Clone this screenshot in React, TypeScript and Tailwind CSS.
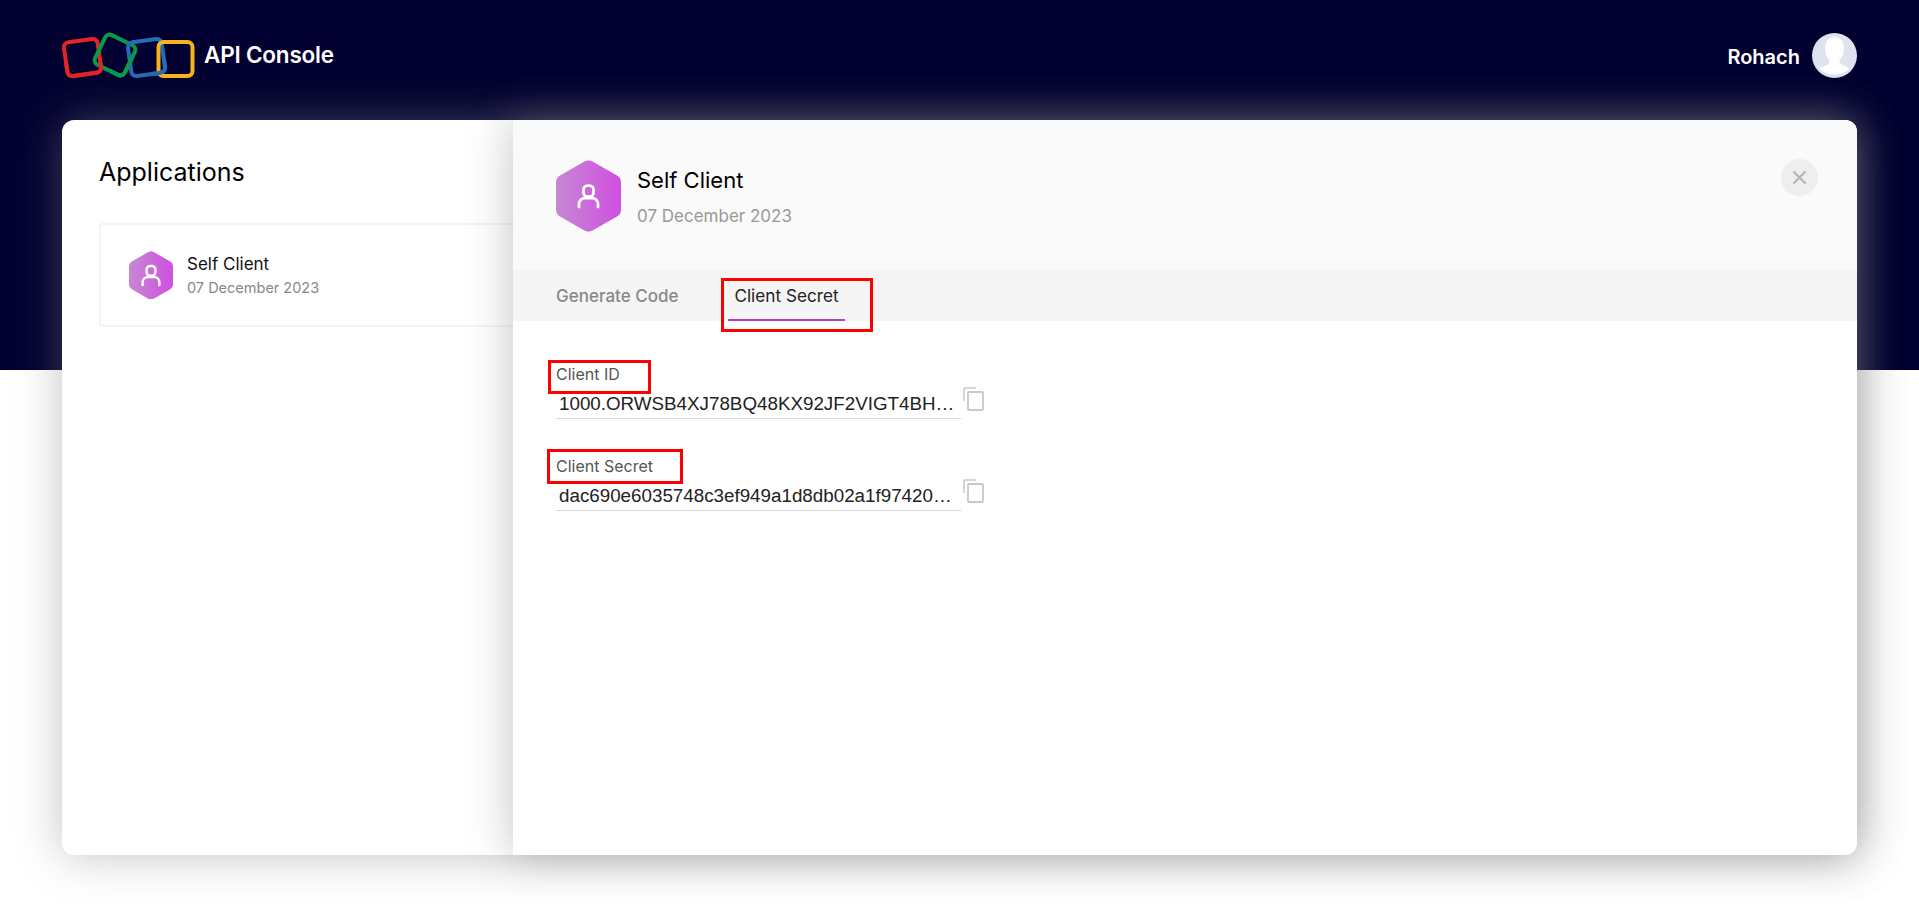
const cardShadow = 'shadow-[0_0_45px_rgba(128,128,128,0.48)]'

function Logo() {
  const red = <rect x="5.5" y="12.500" width="34" height="34" rx="5" stroke="#e42527" transform="rotate(-8 22.500 29.500)" />
  const green = <rect x="38.500" y="10.500" width="33" height="33" rx="5" stroke="#089949" transform="rotate(26 55 27)" />
  const blue = <rect x="69.500" y="12.500" width="34" height="34" rx="5" stroke="#226db4" transform="rotate(-8 86.500 29.500)" />
  return (
    <svg width="140" height="56" viewBox="0 0 140 56" fill="none" strokeWidth="4">
      <defs>
        <clipPath id="logo-red">
          <rect x="0" y="34" width="60" height="22" />
        </clipPath>
        <clipPath id="logo-green">
          <rect x="50" y="30" width="40" height="26" />
        </clipPath>
        <clipPath id="logo-blue">
          <rect x="90" y="30" width="50" height="26" />
        </clipPath>
      </defs>
      {/* links cross over and under each other */}
      {red}
      {green}
      <g clipPath="url(#logo-red)">{red}</g>
      {blue}
      <g clipPath="url(#logo-green)">{green}</g>
      <rect x="98.500" y="14" width="34" height="34" rx="5" stroke="#f9b21d" />
      <g clipPath="url(#logo-blue)">{blue}</g>
    </svg>
  )
}

function HexIcon({ size, personScale = 1 }: { size: number; personScale?: number }) {
  const id = `hex-${size}`
  return (
    <svg width={size} height={size * 1.11} viewBox="0 0 65 72" className="shrink-0">
      <defs>
        <linearGradient id={id} x1="0" y1="0" x2="1" y2="0">
          <stop offset="0" stopColor="#c688d2" />
          <stop offset="1" stopColor="#d04fe0" />
        </linearGradient>
      </defs>
      <path
        d="M28.5 1.5a8 8 0 0 1 8 0l24.5 14a8 8 0 0 1 4 7v27a8 8 0 0 1-4 7l-24.5 14a8 8 0 0 1-8 0L4 56.500a8 8 0 0 1-4-7v-27a8 8 0 0 1 4-7z"
        fill={`url(#${id})`}
      />
      <g
        fill="none"
        stroke="#fff"
        strokeWidth="2.800"
        strokeLinecap="round"
        transform={`translate(32.5 36.5) scale(${personScale}) translate(-32.5 -36.5)`}
      >
        <rect x="27.500" y="25.500" width="10" height="11" rx="4" />
        <path d="M23 47v-3a6 6 0 0 1 6-6h7a6 6 0 0 1 6 6v3" />
      </g>
    </svg>
  )
}

function Avatar() {
  return (
    <svg width="45" height="45" viewBox="0 0 45 45">
      <circle cx="22.500" cy="22.500" r="22.500" fill="#dfe3ee" />
      <path
        d="M22.500 4c-6 0-9.500 4.500-9.500 11 0 5 1.500 9 4 12 .8 1 .6 3-.5 4-2.500 1.800-7 2.500-9 5a22.500 22.500 0 0 0 30 0c-2-2.500-6.500-3.200-9-5-1.100-1-1.300-3-.5-4 2.500-3 4-7 4-12 0-6.500-3.500-11-9.500-11z"
        fill="#fff"
      />
    </svg>
  )
}

function CopyIcon() {
  return (
    <svg width="21" height="24" viewBox="0 0 21 24" fill="none" stroke="#c8c8c8" className="ml-[2px] mt-[2px] shrink-0">
      <rect x="5" y="5" width="15" height="18" rx="1" strokeWidth="1.800" />
      <path d="M1 14V2a1 1 0 0 1 1-1h11" strokeWidth="1.500" />
    </svg>
  )
}

function Field({ label, value, boxClass }: { label: string; value: string; boxClass: string }) {
  return (
    <div className="relative w-[430px]">
      <div className="text-[16px] leading-[22px] text-[#555]">{label}</div>
      <div className={`absolute border-[3px] border-[#ff0000] ${boxClass}`} />
      <div className="flex items-start">
        <div className="w-[405px] whitespace-nowrap border-b border-[#d8d8d8] pl-[3px] pt-[5px] font-['Liberation_Sans',sans-serif] text-[18.800px] leading-[28px] text-[#222]">
          {value}
        </div>
        <CopyIcon />
      </div>
    </div>
  )
}

export default function App() {
  return (
    <div className="h-[915px] overflow-hidden bg-white font-['Inter',sans-serif]">
      <header className="h-[370px] bg-[#020030] px-[62px]">
        <div className="flex h-[110px] items-center justify-between">
          <div className="flex items-center">
            <div className="-ml-[2px] mt-[2px]">
              <Logo />
            </div>
            <span className="ml-[4px] text-[22.500px] font-semibold tracking-[-0.2px] text-white">API Console</span>
          </div>
          <div className="flex items-center gap-[12px]">
            <span className="mt-[3px] text-[20px] font-semibold text-white">Rohach</span>
            <Avatar />
          </div>
        </div>
      </header>

      <main className={`relative mx-[62px] -mt-[250px] flex h-[735px] rounded-xl bg-white ${cardShadow}`}>
        <section className="w-[451px] shrink-0 pl-[37px] pt-[36px]">
          <h1 className="text-[25px] leading-[32px] font-normal text-black">Applications</h1>
          <div className="mt-[35px] flex h-[104px] w-[440px] items-center gap-[14px] rounded-sm border-2 border-[#f3f3f3] pl-[28px]">
            <HexIcon size={44} personScale={1.3} />
            <div>
              <div className="text-[17px] leading-[24px] font-normal text-[#111]">Self Client</div>
              <div className="mt-[1px] text-[14.500px] leading-[22px] text-[#888]">07 December 2023</div>
            </div>
          </div>
        </section>

        <section className={`relative z-10 flex-1 rounded-r-xl bg-white ${cardShadow}`}>
          <div className="flex h-[150px] items-start justify-between rounded-tr-xl bg-[#fafafa] pl-[43px] pr-[39px] pt-[40px]">
            <div className="flex gap-[16px]">
              <HexIcon size={65} />
              <div className="pt-[5px]">
                <div className="text-[22px] leading-[30px] font-normal text-black">Self Client</div>
                <div className="mt-[9px] text-[17px] leading-[24px] text-[#999]">07 December 2023</div>
              </div>
            </div>
            <button className="mt-[-1px] flex h-[37px] w-[37px] items-center justify-center rounded-full bg-[#eeeeee]">
              <svg width="15" height="15" viewBox="0 0 15 15" stroke="#b4b4b4" strokeWidth="2.200">
                <path d="M1.500 1.500l12 12M13.500 1.500l-12 12" />
              </svg>
            </button>
          </div>

          <div className="flex h-[51px] bg-[#f5f5f5] pl-[43px]">
            <div className="flex w-[172px] items-center pt-[2px] text-[17px] font-medium text-[#888]">Generate Code</div>
            <div className="relative flex w-[117px] items-center justify-center border-b-2 border-[#b040c8] pt-[2px] text-[17.200px] font-normal text-[#222]">
              Client Secret
              <div className="absolute -left-[7px] top-[8px] h-[54px] w-[152px] border-[3px] border-[#ff0000]" />
            </div>
          </div>

          <div className="flex flex-col gap-[36px] pl-[43px] pt-[42px]">
            <Field label="Client ID" value="1000.ORWSB4XJ78BQ48KX92JF2VIGT4BH…" boxClass="-left-[8px] -top-[3px] h-[34px] w-[103px]" />
            <Field label="Client Secret" value="dac690e6035748c3ef949a1d8db02a1f97420…" boxClass="-left-[9px] -top-[6px] h-[35px] w-[136px]" />
          </div>
        </section>
      </main>
    </div>
  )
}
